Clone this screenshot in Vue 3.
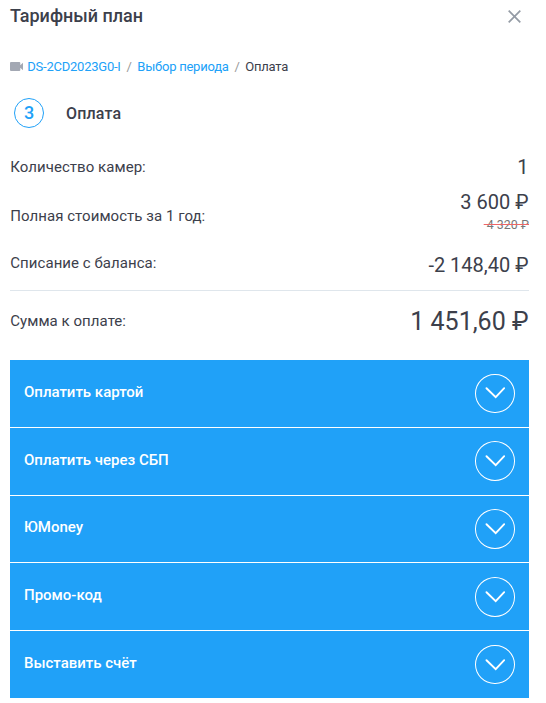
<template>
  <div class="tariff">
    <header class="tariff-header">
      <h1 class="tariff-title">Тарифный план</h1>
      <button class="close-btn" type="button" aria-label="Закрыть">
        <svg width="13" height="13" viewBox="0 0 13 13">
          <path d="M0.7 0.7L12.3 12.3M12.3 0.7L0.7 12.3" />
        </svg>
      </button>
    </header>

    <nav class="breadcrumbs">
      <svg class="camera-icon" width="13" height="9" viewBox="0 0 13 9">
        <path d="M1 0h8.3a1 1 0 0 1 1 1v2.3L13 0.8v7.4l-2.7-2.5V8a1 1 0 0 1-1 1H1a1 1 0 0 1-1-1V1a1 1 0 0 1 1-1z" />
      </svg>
      <a class="crumb-link">DS-2CD2023G0-I</a>
      <span class="crumb-separator">/</span>
      <a class="crumb-link">Выбор периода</a>
      <span class="crumb-separator">/</span>
      <span>Оплата</span>
    </nav>

    <div class="step">
      <span class="step-number">3</span>
      <span class="step-title">Оплата</span>
    </div>

    <section class="summary">
      <div class="summary-row row-count">
        <span class="summary-label">Количество камер:</span>
        <span class="summary-value">1</span>
      </div>
      <div class="summary-row row-cost">
        <span class="summary-label">Полная стоимость за 1 год:</span>
        <div class="cost">
          <span class="summary-value">3 600 ₽</span>
          <span class="old-price">&nbsp;4 320 ₽</span>
        </div>
      </div>
      <div class="summary-row row-balance">
        <span class="summary-label">Списание с баланса:</span>
        <span class="summary-value">-2 148,40 ₽</span>
      </div>
      <div class="summary-row row-total">
        <span class="summary-label">Сумма к оплате:</span>
        <span class="total-value">1 451,60 ₽</span>
      </div>
    </section>

    <section class="methods">
      <div
        v-for="method in methods"
        :key="method.id"
        class="method"
        @click="toggle(method.id)"
      >
        <span class="method-title">{{ method.title }}</span>
        <span class="method-toggle" :class="{ opened: opened === method.id }">
          <svg width="20" height="12" viewBox="0 0 20 12">
            <path d="M1.5 1.2L10.7 10.2L19.2 1.2" />
          </svg>
        </span>
      </div>
    </section>
  </div>
</template>

<script setup>
import { ref } from 'vue'

const methods = [
  { id: 'card', title: 'Оплатить картой' },
  { id: 'sbp', title: 'Оплатить через СБП' },
  { id: 'yoomoney', title: 'ЮMoney' },
  { id: 'promo', title: 'Промо-код' },
  { id: 'invoice', title: 'Выставить счёт' }
]

const opened = ref(null)

const toggle = (id) => {
  opened.value = opened.value === id ? null : id
}
</script>

<style>
body {
  margin: 0;
  background: #fff;
}
</style>

<style scoped>
.tariff {
  box-sizing: border-box;
  width: 546px;
  height: 703px;
  padding: 0 17px 0 10px;
  overflow: hidden;
  font-family: Roboto, "Liberation Sans", sans-serif;
  color: #3c404b;
}

.tariff-header {
  display: flex;
  justify-content: space-between;
  align-items: center;
  height: 32px;
}

.tariff-title {
  margin: 0;
  padding-bottom: 2px;
  font-size: 18px;
  font-weight: 500;
}

.close-btn {
  display: flex;
  margin-right: 8px;
  padding: 0;
  border: none;
  background: none;
  cursor: pointer;
}

.close-btn path {
  fill: none;
  stroke: #949ba5;
  stroke-width: 1.7;
}

.breadcrumbs {
  display: flex;
  align-items: center;
  height: 20px;
  margin-top: 24px;
  font-size: 13px;
  letter-spacing: -0.24px;
}

.camera-icon {
  margin: 1px 4.3px 0 0;
  fill: #a3a8b3;
}

.crumb-link {
  color: #20a1f8;
  cursor: pointer;
}

.crumb-separator {
  margin: 0 5.8px;
  color: #999;
}

.step {
  display: flex;
  align-items: center;
  height: 30px;
  margin: 22px 0 0 4px;
}

.step-number {
  box-sizing: border-box;
  width: 30px;
  height: 30px;
  border: 1.5px solid #20a1f8;
  border-radius: 50%;
  color: #20a1f8;
  font-size: 18px;
  font-weight: 500;
  line-height: 28px;
  text-align: center;
}

.step-title {
  margin-left: 22px;
  font-size: 16px;
  font-weight: 500;
  letter-spacing: 0.15px;
}

.summary {
  margin-top: 24px;
}

.summary-row {
  display: flex;
  justify-content: space-between;
  align-items: center;
}

.row-count {
  height: 30px;
}

.row-cost {
  height: 68px;
}

.row-balance {
  box-sizing: border-box;
  align-items: flex-start;
  height: 41px;
  border-bottom: 1px solid #dfe6ec;
}

.row-balance .summary-label {
  margin-top: 4px;
}

.row-balance .summary-value {
  margin-top: 3px;
}

.row-total {
  height: 60px;
}

.summary-label {
  padding-left: 0.3px;
  font-size: 15px;
  letter-spacing: 0.05px;
}

.summary-value {
  padding-right: 0.5px;
  font-size: 20px;
  line-height: 24px;
}

.cost {
  display: flex;
  flex-direction: column;
  align-items: flex-end;
  padding-bottom: 7px;
}

.old-price {
  color: #777;
  font-size: 12.4px;
  line-height: 21px;
  text-decoration: line-through #ee6666;
}

.total-value {
  padding-right: 0.5px;
  font-size: 25px;
}

.methods {
  display: flex;
  flex-direction: column;
  gap: 1px;
  height: 338px;
  margin-top: 9px;
}

.method {
  display: flex;
  flex: 1;
  justify-content: space-between;
  align-items: center;
  padding: 0 14px;
  background: #20a1f8;
  color: #fff;
  cursor: pointer;
}

.method-title {
  padding-bottom: 3px;
  font-size: 15px;
  font-weight: 500;
  letter-spacing: -0.01px;
}

.method-toggle {
  box-sizing: border-box;
  display: flex;
  justify-content: center;
  align-items: center;
  width: 40px;
  height: 39.6px;
  border: 1px solid #fff;
  border-radius: 50%;
}

.method-toggle.opened {
  transform: rotate(180deg);
}

.method-toggle path {
  fill: none;
  stroke: #fff;
  stroke-width: 1.9;
  stroke-linecap: round;
}
</style>
